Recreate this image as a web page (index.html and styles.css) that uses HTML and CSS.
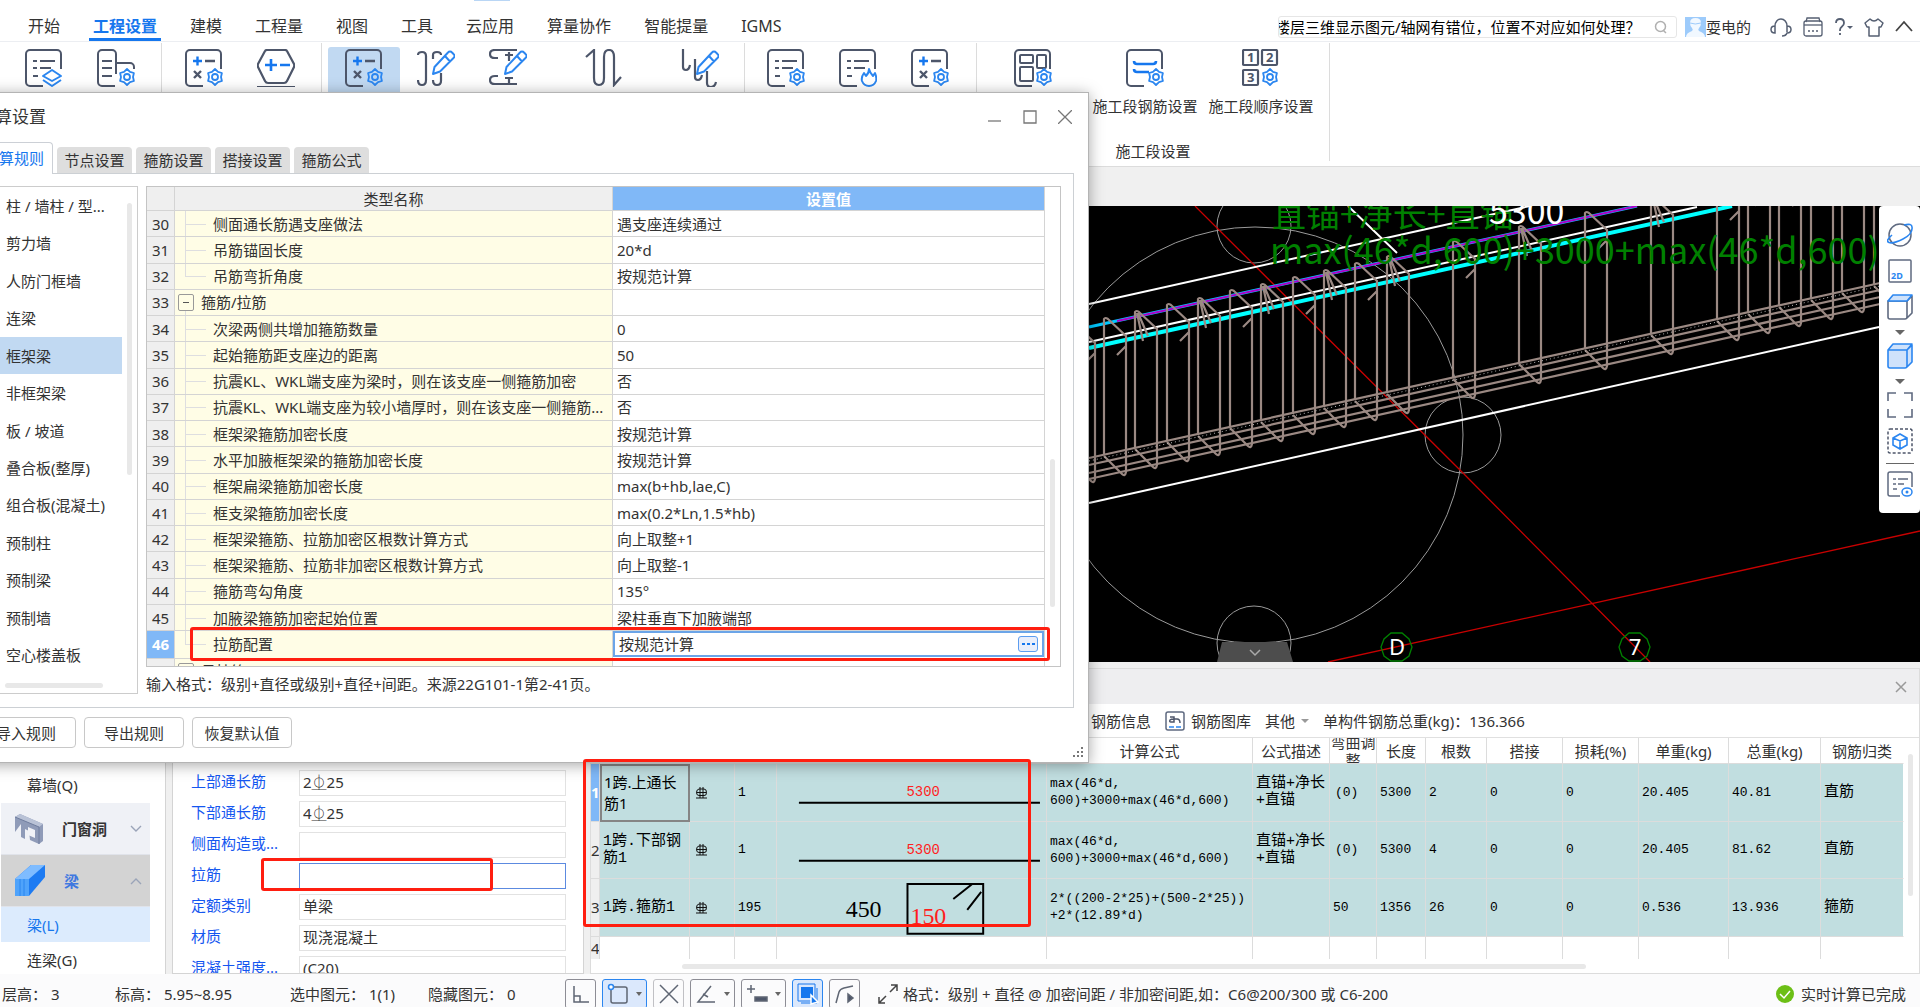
FILE: index.html
```html
<!DOCTYPE html>
<html lang="zh-CN">
<head>
  <meta charset="UTF-8">
  <meta name="viewport" content="width=device-width, initial-scale=1.0">
  <title>计算设置</title>
  <link rel="stylesheet" href="styles.css">
</head>
<body>
  <!-- shared icon parts -->
  <svg class="defs" width="0" height="0" aria-hidden="true">
    <symbol id="gear" viewBox="0 0 38 38">
      <g fill="none" stroke="#2b86f0" stroke-width="1.8" stroke-linejoin="round">
        <path d="M30 20l3 2.8 3.9 1.2-.9 4 .9 4-3.9 1.2-3 2.8-3-2.8-3.9-1.2.9-4-.9-4 3.9-1.2z"/>
        <circle cx="30" cy="28" r="3"/>
      </g>
    </symbol>
    <symbol id="page" viewBox="0 0 38 38">
      <path d="M36 20V5a4 4 0 0 0-4-4H5a4 4 0 0 0-4 4v28a4 4 0 0 0 4 4h13" fill="none" stroke="#4d566a" stroke-width="2"/>
    </symbol>
    <symbol id="lines" viewBox="0 0 38 38">
      <path d="M8 12h4M15 12h15M8 19h4M15 19h11M8 27h5" fill="none" stroke="#4d566a" stroke-width="2.2"/>
    </symbol>
    <symbol id="calc" viewBox="0 0 38 38">
      <path d="M8 12h9M12.500 7.500v9" fill="none" stroke="#1677ee" stroke-width="2.4"/>
      <path d="M20 12h10M9 22l7 7M16 22l-7 7" fill="none" stroke="#4d566a" stroke-width="2.4"/>
    </symbol>
    <symbol id="pencil" viewBox="0 0 38 38">
      <path d="M16 25l1.500-7L31 3.500a2.500 2.500 0 0 1 4 0l1.500 1.500a2.500 2.500 0 0 1 0 4L23 22.500zM28 7l5 5.500" fill="#fff" stroke="#2b86f0" stroke-width="2" stroke-linejoin="round"/>
    </symbol>
    <symbol id="rebar" viewBox="0 0 13 13">
      <path d="M5 1v11M8 1v11M1 12h11M1.500 6.500h10M4 3h5q2.500 0 2.500 3.500T9 9.500H4Q1.500 9.500 1.500 6.500T4 3z" fill="none" stroke="#111" stroke-width="1"/>
    </symbol>
  </svg>

  <header class="menubar">
    <nav class="menu">
      <a href="#">开始</a>
      <a href="#" class="active">工程设置</a>
      <a href="#">建模</a>
      <a href="#">工程量</a>
      <a href="#">视图</a>
      <a href="#">工具</a>
      <a href="#" class="hinted">云应用</a>
      <a href="#">算量协作</a>
      <a href="#">智能提量</a>
      <a href="#">IGMS</a>
    </nav>
    <div class="account">
      <div class="search">
        <input type="text" aria-label="搜索" value="楼层三维显示图元/轴网有错位，位置不对应如何处理？">
        <svg width="14" height="14" viewBox="0 0 14 14" fill="none" stroke="#b0b0b0" stroke-width="1.500"><circle cx="6.500" cy="6.500" r="5"/><path d="M9 10l3 3"/></svg>
      </div>
      <svg class="avatar" width="21" height="20" viewBox="0 0 21 20"><rect width="21" height="20" fill="#9dcbfb"/><path d="M1 20q0-4 6-6 1.500-1 0-3-2-2-2-5 0-5 5.500-5T16 6q0 3-2 5-1.500 2 0 3 6 2 6 6z" fill="#f1f8ff"/><path d="M5 6q5 2 11 0" stroke="#9dcbfb" fill="none"/></svg>
      <span class="user">耍电的</span>
      <div class="tools">
        <button type="button" aria-label="客服"><svg width="22" height="20" viewBox="0 0 22 20" fill="none" stroke="#555f72" stroke-width="1.500"><path d="M5 15V9a6 7 0 0 1 12 0v6M5 9q-4 0-4 3.500T5 16zM17 9q4 0 4 3.500T17 16q-1 3-5 3"/></svg></button>
        <button type="button" aria-label="日历"><svg width="20" height="20" viewBox="0 0 20 20" fill="none" stroke="#555f72" stroke-width="1.300"><path d="M3 5l1-4h12l1 4"/><rect x="1" y="4" width="18" height="15" rx="2"/><path d="M1 8h18"/><path d="M5 14h2M9 14h2M13 14h2"/></svg></button>
        <button type="button" aria-label="帮助"><svg width="19" height="20" viewBox="0 0 19 20"><path d="M2 6q0-4 4-4t4 4q0 2-2 3.500T6 13v1M6 16v2" fill="none" stroke="#555f72" stroke-width="1.800"/><path d="M13 9h6l-3 3z" fill="#555f72"/></svg></button>
        <button type="button" aria-label="皮肤"><svg width="20" height="20" viewBox="0 0 20 20" fill="none" stroke="#555f72" stroke-width="1.500" stroke-linejoin="round"><path d="M6 2q4 4 8 0l5 4-2 4h-2v9H5v-9H3L1 6z"/></svg></button>
        <button type="button" aria-label="收起"><svg width="18" height="20" viewBox="0 0 18 20" fill="none" stroke="#444" stroke-width="1.800"><path d="M1 14l8-9 8 9"/></svg></button>
      </div>
    </div>
  </header>

  <section class="ribbon">
    <div class="group g1">
      <div class="items">
        <button type="button" aria-label="工程信息"><svg viewBox="0 0 38 38"><use href="#page"/><use href="#lines"/><g fill="none" stroke="#2b86f0" stroke-width="2" stroke-linejoin="round"><path d="M18 27l9-6 9 6-9 5z" fill="#fff"/><path d="M18 31l9 6 9-6"/></g></svg></button>
        <button type="button" aria-label="楼层设置"><svg viewBox="0 0 38 38"><path d="M18 37H5a4 4 0 0 1-4-4V5a4 4 0 0 1 4-4h10a4 4 0 0 1 4 4v20M19 14h14a4 4 0 0 1 4 4v2M5 12h10M5 19h10M5 27h10" fill="none" stroke="#4d566a" stroke-width="2"/><use href="#gear"/></svg></button>
      </div>
    </div>
    <div class="group g2">
      <div class="items">
        <button type="button" aria-label="计算设置"><svg viewBox="0 0 38 38"><use href="#page"/><use href="#calc"/><use href="#gear"/></svg></button>
        <button type="button" aria-label="计算规则"><svg viewBox="0 0 38 38"><path d="M10 1h18q1.500 0 2 1l7 13q.5 1.500 0 3l-7 14q-1 2-3 2H11q-2 0-3-2L1 18q-.5-1.500 0-3L8 2q.5-1 2-1zM0 38h38" fill="none" stroke="#4d566a" stroke-width="2.200"/><path d="M8 16h12M14 10v12M23 16h10" fill="none" stroke="#1677ee" stroke-width="2.600"/></svg></button>
      </div>
    </div>
    <div class="group g3">
      <div class="items">
        <button type="button" class="on" aria-label="钢筋计算设置"><svg viewBox="0 0 38 38"><use href="#page"/><use href="#calc"/><use href="#gear"/></svg></button>
        <button type="button" aria-label="比重设置"><svg viewBox="0 0 38 38"><path d="M1 6q0-3 4-3t4 4v24q0 5-4 5t-4-5M16 10V6q0-3 4-3t4 3M24 24v8q0 4-4 4t-4-5" fill="none" stroke="#4d566a" stroke-width="2.200"/><use href="#pencil"/></svg></button>
        <button type="button" aria-label="弯钩设置"><svg viewBox="0 0 38 38"><path d="M28 1H6Q1 1 1 5t5 4h3M28 35H6q-5 0-5-4t5-4h3M16 6h8M20 3v9M16 29h8M20 29v6" fill="none" stroke="#4d566a" stroke-width="2.200"/><use href="#pencil"/></svg></button>
        <button type="button" class="xwide" aria-label="弯曲调整值设置"><svg viewBox="0 0 38 38"><path d="M1 8l8-7v28q0 7 5 7t5-7V8q0-7 5-7t5 7v28l7-8" fill="none" stroke="#4d566a" stroke-width="2.200"/></svg></button>
        <button type="button" aria-label="损耗设置"><svg viewBox="0 0 38 38"><path d="M2 0v18q0 3 3 3t4-5M14 10v18q0 3 3 3t4-5M26 22v12q0 4 4 4t5-5" fill="none" stroke="#4d566a" stroke-width="2.200"/><use href="#pencil"/></svg></button>
      </div>
    </div>
    <div class="group g4">
      <div class="items">
        <button type="button" aria-label="设置一"><svg viewBox="0 0 38 38"><use href="#page"/><use href="#lines"/><use href="#gear"/></svg></button>
        <button type="button" aria-label="设置二"><svg viewBox="0 0 38 38"><use href="#page"/><use href="#lines"/><path d="M30 20q1 4 4 7l2-3q2 5 1 8-2 5-7 5t-7-5q-1-4 2-8l2 3q3-3 3-7z" fill="#fff" stroke="#2b86f0" stroke-width="2" stroke-linejoin="round"/></svg></button>
        <button type="button" aria-label="设置三"><svg viewBox="0 0 38 38"><use href="#page"/><use href="#calc"/><use href="#gear"/></svg></button>
      </div>
    </div>
    <div class="group g5">
      <div class="items">
        <button type="button" class="wide" aria-label="施工段类型设置"><svg viewBox="0 0 38 38"><use href="#page"/><g fill="none" stroke="#4d566a" stroke-width="2"><rect x="6" y="6" width="13" height="8" rx="1"/><rect x="6" y="18" width="13" height="14" rx="1"/><rect x="23" y="6" width="9" height="13" rx="1"/></g><use href="#gear"/></svg></button>
        <button type="button" class="wide"><svg viewBox="0 0 38 38"><use href="#page"/><path d="M8 12q0 3 3 3h16q3 0 3-3M8 20q0 3 3 3h12" fill="none" stroke="#1677ee" stroke-width="2.600"/><use href="#gear"/></svg>施工段钢筋设置</button>
        <button type="button" class="xwide"><svg viewBox="0 0 38 38"><g fill="none" stroke="#4d566a" stroke-width="2.200"><rect x="1" y="1" width="15" height="15" rx="1"/><rect x="20" y="1" width="15" height="15" rx="1"/><rect x="1" y="21" width="15" height="15" rx="1"/></g><g class="digits"><text x="5" y="13">1</text><text x="24" y="13">2</text><text x="5" y="33">3</text></g><use href="#gear" x="-2"/></svg>施工段顺序设置</button>
      </div>
      <div class="caption">施工段设置</div>
    </div>
  </section>

  <main class="work">
    <aside class="nav">
      <ul>
        <li class="sub"><a href="#">幕墙(Q)</a></li>
        <li class="cat">
          <svg width="28" height="30" viewBox="0 0 28 30"><path d="M0 3l5-3 23 10v17l-4 3-9-4-1-9-4-2v10l-4-2V10L0 18z" fill="#8f9bb8"/><path d="M0 3l5-3 23 10-4 3z" fill="#b9c2d6"/><path d="M13 13l7 3v8l-7-3z" fill="#f0f2f7"/><path d="M0 3l24 10v17" fill="none" stroke="#6f7d9e"/></svg>
          <a href="#">门窗洞</a>
          <svg class="arrow" width="12" height="8" viewBox="0 0 12 8"><path d="M1 1l5 5 5-5"/></svg>
        </li>
        <li class="cat open">
          <svg width="30" height="31" viewBox="0 0 30 31"><path d="M0 14L16 0h14v12L14 31H0z" fill="#1d7bf2"/><path d="M0 14L16 0h14L14 14z" fill="#7fbcff"/><path d="M0 14h14v17H0z" fill="#4fa3fb"/><path d="M5 14v17M9 14v17" stroke="#2b86f0"/></svg>
          <a href="#">梁</a>
          <svg class="arrow" width="12" height="8" viewBox="0 0 12 8"><path d="M1 7l5-5 5 5"/></svg>
        </li>
        <li class="sub current"><a href="#">梁(L)</a></li>
        <li class="sub"><a href="#">连梁(G)</a></li>
      </ul>
    </aside>

    <section class="props">
      <form>
        <label for="p1">上部通长筋</label><input id="p1" type="text" value="2⏂25">
        <label for="p2">下部通长筋</label><input id="p2" type="text" value="4⏂25">
        <label for="p3">侧面构造或...</label><input id="p3" type="text">
        <label for="p4">拉筋</label><input id="p4" type="text" class="focus">
        <label for="p5">定额类别</label><input id="p5" type="text" value="单梁">
        <label for="p6">材质</label><input id="p6" type="text" value="现浇混凝土">
        <label for="p7">混凝土强度...</label><input id="p7" type="text" value="(C20)">
      </form>
    </section>

    <section class="stage">
      <div class="canvas">
        <svg class="scene" viewBox="590 206 1330 456" preserveAspectRatio="xMaxYMin slice">
          <defs>
            <!-- one stirrup, origin at the top of its left leg -->
            <g id="st-a"><path d="M0 137V1q1-2 4 0l18 17v136q-1 5-4 2L0 138M22 28l-9 9"/></g>
            <g id="st-b"><path d="M0 137V1q1-2 4 0l18 17v136q-1 5-4 2L0 138M2 2l6 28M3 2l10 23"/></g>
          </defs>
          <g fill="none" stroke="#9a9a9a">
            <circle cx="1255" cy="435" r="208"/>
            <circle cx="1254" cy="226" r="37"/>
            <circle cx="1463" cy="435" r="38"/>
            <circle cx="1254" cy="643" r="37"/>
          </g>
          <g fill="none" stroke="#c80000" stroke-width="1.300">
            <path d="M1195 206L1463 473L1650 662M1328 662L1920 531"/>
          </g>
          <g fill="none" stroke="#fff" stroke-width="2">
            <path d="M1089 304L1530 206M1348 206l49 47"/>
            <path d="M1089 503L1879 327"/>
          </g>
          <path d="M1089 327L1637 206" stroke="#00c8ff" stroke-width="3" fill="none"/>
          <path d="M1117 321L1637 206" stroke="#b000c8" stroke-width="2" fill="none"/>
          <path d="M1089 348L1732 206" stroke="#00ffff" stroke-width="4" fill="none"/>
          <path d="M1089 342L1697 207" stroke="#fff" stroke-width="2" fill="none"/>
          <g fill="none" stroke="#9b8983" stroke-width="2.200">
            <path d="M1089 458L1880 283M1089 465L1880 290M1089 473L1880 297M1089 479L1880 304"/>
            <use href="#st-a" x="1073" y="325"/>
            <use href="#st-a" x="1104" y="318"/>
            <use href="#st-b" x="1135" y="311"/>
            <use href="#st-a" x="1167" y="304"/>
            <use href="#st-b" x="1198" y="298"/>
            <use href="#st-a" x="1230" y="290"/>
            <use href="#st-b" x="1261" y="284"/>
            <use href="#st-a" x="1293" y="277"/>
            <use href="#st-b" x="1324" y="270"/>
            <use href="#st-a" x="1355" y="263"/>
            <use href="#st-b" x="1387" y="256"/>
            <use href="#st-a" x="1453" y="241"/>
            <use href="#st-b" x="1519" y="226"/>
            <use href="#st-a" x="1585" y="212"/>
            <use href="#st-b" x="1651" y="197"/>
            <use href="#st-a" x="1717" y="183"/>
            <use href="#st-b" x="1748" y="176"/>
            <use href="#st-a" x="1779" y="169"/>
            <use href="#st-b" x="1811" y="162"/>
            <use href="#st-a" x="1842" y="155"/>
            <use href="#st-b" x="1874" y="148"/>
          </g>
          <path d="M1089 461L1880 286" stroke="#bbb" stroke-dasharray="1 3" fill="none"/>
          <g class="notes">
            <text x="1272" y="227" class="desc">直锚+净长+直锚</text>
            <text x="1270" y="264">max(46*d,600)+3000+max(46*d,600)</text>
            <text x="1489" y="224" class="len">5300</text>
          </g>
          <path d="M1222 642h65l6 20h-76z" fill="#4d4d4d"/>
          <path d="M1250 650l5 5 5-5" fill="none" stroke="#aaa" stroke-width="1.500"/>
          <g fill="none" stroke="#008000" stroke-width="1.300">
            <path d="M1391 633h11l7 6 3 8-3 9-7 5h-11l-7-5-3-9 3-8z"/>
            <path d="M1629 633h11l7 6 3 8-3 9-7 5h-11l-7-5-3-9 3-8z"/>
          </g>
          <g class="axis"><text x="1397" y="655">D</text><text x="1635" y="655">7</text></g>
        </svg>
        <div class="viewbar">
          <button type="button" aria-label="动态观察"><svg width="26" height="26" viewBox="0 0 26 26" fill="none"><circle cx="13" cy="13" r="11" stroke="#5f6a80" stroke-width="1.500"/><path d="M5 13Q-2 19 2 20.500T16 17 25 5q0-4-8-2" stroke="#2b86f0" stroke-width="1.600"/></svg></button>
          <button type="button" aria-label="二维"><svg width="26" height="26" viewBox="0 0 26 26"><rect x="2" y="2" width="22" height="22" rx="1" fill="none" stroke="#5f6a80" stroke-width="1.500"/><text x="4" y="21" class="two-d">2D</text></svg></button>
          <button type="button" aria-label="视图方向"><svg width="26" height="26" viewBox="0 0 26 26" stroke-width="1.600" stroke-linejoin="round"><path d="M1 7h19v16q0 2-2 2H3q-2 0-2-2zM20 7l5-5v17l-5 5" fill="#fff" stroke="#5f6a80"/><path d="M1 7l5-6h19l-5 6z" fill="#cfe2fb" stroke="#2b86f0"/></svg></button>
          <i class="caret"></i>
          <button type="button" aria-label="显示模式"><svg width="26" height="26" viewBox="0 0 26 26" stroke-width="1.600" stroke-linejoin="round" fill="#cfe2fb" stroke="#2b86f0"><path d="M1 7h19v16q0 2-2 2H3q-2 0-2-2zM20 7l5-5v17l-5 5M1 7l5-6h19l-5 6z"/></svg></button>
          <i class="caret"></i>
          <button type="button" aria-label="全屏"><svg width="26" height="26" viewBox="0 0 26 26" fill="none" stroke="#5f6a80" stroke-width="1.600"><path d="M1 9V1h8M17 1h8v8M25 17v8h-8M9 25H1v-8"/></svg></button>
          <button type="button" aria-label="局部三维"><svg width="26" height="26" viewBox="0 0 26 26" fill="none"><rect x="1" y="1" width="24" height="24" rx="2" stroke="#4d566a" stroke-width="1.500" stroke-dasharray="3 2"/><path d="M13 6l7 4v7l-7 4-7-4v-7zM6 10l7 3 7-3M13 13v8" stroke="#2b86f0" stroke-width="1.600"/></svg></button>
          <hr>
          <button type="button" aria-label="显示设置"><svg width="26" height="26" viewBox="0 0 26 26" fill="none"><path d="M25 16V3q0-2-2-2H3Q1 1 1 3v20q0 2 2 2h10M6 8h3M11 8h10M6 13h3M11 13h6M6 18h4" stroke="#5f6a80" stroke-width="1.500"/><ellipse cx="20" cy="21" rx="5" ry="4" stroke="#2b86f0" stroke-width="1.500"/><circle cx="20" cy="21" r="1.500" fill="#2b86f0"/></svg></button>
        </div>
      </div>

      <div class="dock">
        <div class="dock-title">
          <button type="button" aria-label="关闭"><svg width="12" height="12" viewBox="0 0 12 12" stroke="#999" stroke-width="1.500"><path d="M1 1l10 10M11 1L1 11"/></svg></button>
        </div>
        <div class="dock-tools">
          <a href="#">钢筋信息</a>
          <a href="#"><svg width="20" height="20" viewBox="0 0 20 20" fill="none"><rect x="1" y="1" width="18" height="18" rx="2" stroke="#5f6a80" stroke-width="1.500"/><path d="M5 6h4v5H6q-2 0-1-2 1-1 4-1h3q3 0 3 4" stroke="#4d566a" stroke-width="1.500"/><path d="M4 16h5M11 16h5" stroke="#2b86f0" stroke-width="1.500"/></svg>钢筋图库</a>
          <a href="#">其他<i class="caret"></i></a>
          <span>单构件钢筋总重(kg)：136.366</span>
        </div>
        <div class="bars-wrap">
          <table class="bars">
            <colgroup>
              <col class="w9"><col class="w90"><col class="w45"><col class="w42"><col class="w270"><col><col class="w77"><col class="w47"><col class="w49"><col class="w61"><col class="w76"><col class="w76"><col class="w90"><col class="w92"><col class="w83">
            </colgroup>
            <thead>
              <tr><th></th><th>筋号</th><th>级别</th><th>直径</th><th>图形</th><th>计算公式</th><th>公式描述</th><th><div class="tight">弯曲调整</div></th><th>长度</th><th>根数</th><th>搭接</th><th>损耗(%)</th><th>单重(kg)</th><th>总重(kg)</th><th>钢筋归类</th></tr>
            </thead>
            <tbody>
              <tr class="bar">
                <th class="on">1</th><td class="picked">1跨.上通长<br>筋1</td><td><svg class="rb" viewBox="0 0 13 13"><use href="#rebar"/></svg></td><td>1</td>
                <td class="shape"><svg viewBox="0 0 270 56"><text x="130" y="32" class="red">5300</text><path d="M22 39h242" stroke="#000" stroke-width="2"/></svg></td>
                <td>max(46*d,<br>600)+3000+max(46*d,600)</td><td>直锚+净长<br>+直锚</td><td class="in">(0)</td><td>5300</td><td>2</td><td>0</td><td>0</td><td>20.405</td><td>40.81</td><td>直筋</td>
              </tr>
              <tr class="bar">
                <th>2</th><td>1跨.下部钢<br>筋1</td><td><svg class="rb" viewBox="0 0 13 13"><use href="#rebar"/></svg></td><td>1</td>
                <td class="shape"><svg viewBox="0 0 270 56"><text x="130" y="32" class="red">5300</text><path d="M22 39h242" stroke="#000" stroke-width="2"/></svg></td>
                <td>max(46*d,<br>600)+3000+max(46*d,600)</td><td>直锚+净长<br>+直锚</td><td class="in">(0)</td><td>5300</td><td>4</td><td>0</td><td>0</td><td>20.405</td><td>81.62</td><td>直筋</td>
              </tr>
              <tr class="bar">
                <th>3</th><td>1跨.箍筋1</td><td><svg class="rb" viewBox="0 0 13 13"><use href="#rebar"/></svg></td><td>195</td>
                <td class="shape"><svg viewBox="0 0 270 56"><g class="big"><text x="69" y="37">450</text><text x="134" y="44" class="red">150</text></g><path d="M131 4h76v50h-76zM177 19l19-15M191 30l14-18" fill="none" stroke="#000" stroke-width="2"/></svg></td>
                <td>2*((200-2*25)+(500-2*25))<br>+2*(12.89*d)</td><td></td><td>50</td><td>1356</td><td>26</td><td>0</td><td>0</td><td>0.536</td><td>13.936</td><td>箍筋</td>
              </tr>
              <tr class="blank"><th>4</th><td></td><td></td><td></td><td></td><td></td><td></td><td></td><td></td><td></td><td></td><td></td><td></td><td></td><td></td></tr>
            </tbody>
          </table>
          <i class="vscroll"></i>
          <i class="hscroll"></i>
        </div>
      </div>
    </section>
  </main>

  <footer class="status">
    <span class="s1">层高：&nbsp;3</span>
    <span class="s2">标高：&nbsp;5.95~8.95</span>
    <span class="s3">选中图元：&nbsp;1(1)</span>
    <span class="s4">隐藏图元：&nbsp;0</span>
    <div class="modes">
      <button type="button" aria-label="正交"><svg width="20" height="20" viewBox="0 0 20 20"><path d="M3 2v16h15M3 12h6v6"/></svg></button>
      <button type="button" class="drop on" aria-label="矩形"><svg width="22" height="22" viewBox="0 0 22 22"><rect x="4" y="4" width="16" height="16" rx="2"/><circle cx="4" cy="4" r="2.500" fill="#fff" stroke="#2b86f0"/></svg><i class="caret"></i></button>
      <button type="button" class="dim" aria-label="交点"><svg width="22" height="20" viewBox="0 0 22 20"><path d="M2 1l18 18M20 1L2 19"/></svg></button>
      <button type="button" class="drop" aria-label="角度"><svg width="22" height="20" viewBox="0 0 22 20"><path d="M20 18H3L16 2M8 10l5 3"/></svg><i class="caret"></i></button>
      <button type="button" class="drop" aria-label="偏移"><svg width="22" height="20" viewBox="0 0 22 20"><path d="M5 1v8M1 5h8"/><path d="M9 13h12v4H9z" fill="#4d566a"/></svg><i class="caret"></i></button>
      <button type="button" class="on" aria-label="图层"><svg width="22" height="22" viewBox="0 0 22 22"><path d="M4 4h12v11H4z" fill="#1677ee" stroke="none"/><path d="M1 1h17v17H1zM4 20h16V5" stroke="#1677ee" stroke-width="1"/><path d="M14 12l7 7-7 2z" fill="#1677ee" stroke="#fff"/></svg></button>
      <button type="button" aria-label="折线"><svg width="22" height="20" viewBox="0 0 22 20"><path d="M2 19L5 8q1-3 5-4l9-2"/><path d="M14 10v8l5-4z" fill="#4d566a"/></svg></button>
    </div>
    <svg class="expand" width="20" height="20" viewBox="0 0 20 20" fill="none" stroke="#444" stroke-width="1.500"><path d="M12 8l7-7M13 1h6v6M8 12l-7 7M1 13v6h6"/></svg>
    <span>格式：级别 + 直径 @ 加密间距 / 非加密间距,如：C6@200/300 或 C6-200</span>
    <span class="done"><svg width="18" height="18" viewBox="0 0 18 18"><circle cx="9" cy="9" r="9" fill="#6cbf16"/><path d="M4 9l4 4 6-7" fill="none" stroke="#fff" stroke-width="1.500"/></svg>实时计算已完成</span>
  </footer>

  <section class="dialog" role="dialog" aria-labelledby="dlg">
    <div class="titlebar">
      <h1 id="dlg">计算设置</h1>
      <button type="button" aria-label="最小化"><svg width="14" height="14" viewBox="0 0 14 14"><path d="M0 11h13"/></svg></button>
      <button type="button" aria-label="最大化"><svg width="14" height="14" viewBox="0 0 14 14"><path d="M1 1h12v12H1z"/></svg></button>
      <button type="button" aria-label="关闭"><svg width="14" height="14" viewBox="0 0 14 14"><path d="M0 0l14 14M14 0L0 14"/></svg></button>
    </div>
    <div class="tabs">
      <button type="button" class="active">计算规则</button>
      <button type="button">节点设置</button>
      <button type="button">箍筋设置</button>
      <button type="button">搭接设置</button>
      <button type="button">箍筋公式</button>
    </div>
    <div class="pane">
      <div class="kinds">
        <ul>
          <li>柱 / 墙柱 / 型...</li>
          <li>剪力墙</li>
          <li>人防门框墙</li>
          <li>连梁</li>
          <li class="on">框架梁</li>
          <li>非框架梁</li>
          <li>板 / 坡道</li>
          <li>叠合板(整厚)</li>
          <li>组合板(混凝土)</li>
          <li>预制柱</li>
          <li>预制梁</li>
          <li>预制墙</li>
          <li>空心楼盖板</li>
        </ul>
        <i class="vscroll"></i>
        <i class="hscroll"></i>
      </div>
      <div class="rules-col">
        <div class="rules-wrap">
          <table class="rules">
            <colgroup><col class="num"><col><col class="val"></colgroup>
            <thead><tr><th></th><th>类型名称</th><th class="on">设置值</th></tr></thead>
            <tbody>
              <tr><th>30</th><td>侧面通长筋遇支座做法</td><td>遇支座连续通过</td></tr>
              <tr><th>31</th><td>吊筋锚固长度</td><td>20*d</td></tr>
              <tr class="last"><th>32</th><td>吊筋弯折角度</td><td>按规范计算</td></tr>
              <tr class="head"><th>33</th><td><button type="button" aria-label="折叠"></button>箍筋/拉筋</td><td></td></tr>
              <tr><th>34</th><td>次梁两侧共增加箍筋数量</td><td>0</td></tr>
              <tr><th>35</th><td>起始箍筋距支座边的距离</td><td>50</td></tr>
              <tr><th>36</th><td>抗震KL、WKL端支座为梁时，则在该支座一侧箍筋加密</td><td>否</td></tr>
              <tr><th>37</th><td>抗震KL、WKL端支座为较小墙厚时，则在该支座一侧箍筋...</td><td>否</td></tr>
              <tr><th>38</th><td>框架梁箍筋加密长度</td><td>按规范计算</td></tr>
              <tr><th>39</th><td>水平加腋框架梁的箍筋加密长度</td><td>按规范计算</td></tr>
              <tr><th>40</th><td>框架扁梁箍筋加密长度</td><td>max(b+hb,lae,C)</td></tr>
              <tr><th>41</th><td>框支梁箍筋加密长度</td><td>max(0.2*Ln,1.5*hb)</td></tr>
              <tr><th>42</th><td>框架梁箍筋、拉筋加密区根数计算方式</td><td>向上取整+1</td></tr>
              <tr><th>43</th><td>框架梁箍筋、拉筋非加密区根数计算方式</td><td>向上取整-1</td></tr>
              <tr><th>44</th><td>箍筋弯勾角度</td><td>135°</td></tr>
              <tr><th>45</th><td>加腋梁箍筋加密起始位置</td><td>梁柱垂直下加腋端部</td></tr>
              <tr class="last editing"><th>46</th><td>拉筋配置</td><td><div class="edit">按规范计算<button type="button" aria-label="更多"><i></i><i></i><i></i></button></div></td></tr>
              <tr class="head"><th></th><td><button type="button" aria-label="折叠"></button>吊挂筋</td><td></td></tr>
            </tbody>
          </table>
          <i class="vscroll"></i>
        </div>
        <p>输入格式：级别+直径或级别+直径+间距。来源22G101-1第2-41页。</p>
      </div>
    </div>
    <div class="actions">
      <button type="button">导入规则</button>
      <button type="button">导出规则</button>
      <button type="button">恢复默认值</button>
    </div>
    <svg class="grip" width="11" height="11" viewBox="0 0 11 11" fill="#777"><path d="M8 0h2v2H8zM8 4h2v2H8zM8 8h2v2H8zM4 4h2v2H4zM4 8h2v2H4zM0 8h2v2H0z"/></svg>
  </section>

  <i class="mark mark-rule"></i>
  <i class="mark mark-bars"></i>
  <i class="mark mark-tie"></i>
</body>
</html>
```

FILE: styles.css
```css
* {
  box-sizing: border-box;
}

body {
  margin: 0;
  height: 100vh;
  display: flex;
  flex-direction: column;
  overflow: hidden;
  position: relative;
  background: #fff;
  color: #333;
  font: 15px/22px "Noto Sans", "Noto Sans CJK SC", sans-serif;
  white-space: nowrap;
}

a {
  color: inherit;
  text-decoration: none;
}

button,
input {
  font: inherit;
  color: inherit;
  margin: 0;
  padding: 0;
  border: 0;
  background: none;
}

ul {
  list-style: none;
  margin: 0;
  padding: 0;
}

svg {
  display: block;
  flex: none;
}

.defs {
  position: absolute;
}

.caret {
  border: 4px solid transparent;
  border-top-color: #666;
  border-bottom: 0;
}

/* menu */
.menubar {
  flex: none;
  height: 42px;
  display: flex;
  justify-content: space-between;
  border-bottom: 1px solid #eceef2;
  background: #fff;
}

.menu {
  display: flex;
  gap: 25px;
  padding-left: 24px;
  font-size: 16px;
}

.menu a {
  padding: 15px 4px 0;
  height: 41px;
  border-bottom: 3px solid transparent;
}

.menu .active {
  color: #1677ee;
  font-weight: 700;
  border-bottom-color: #1677ee;
}

.menu .hinted {
  background: linear-gradient(#b9d6f5, #b9d6f5) 12px 0 / 36px 1px no-repeat;
}

.account {
  display: flex;
  align-items: center;
  padding: 13px 7px 0 0;
}

.search {
  width: 399px;
  height: 22px;
  display: flex;
  align-items: center;
  border: 1px solid #e6e6e6;
  border-radius: 3px;
  padding-right: 8px;
}

.search input {
  flex: 1;
  min-width: 0;
  color: #000;
  text-indent: -4px;
}

.avatar {
  margin-left: 8px;
}

.user {
  width: 64px;
}

.tools {
  display: flex;
  gap: 11px;
}

/* ribbon */
.ribbon {
  flex: none;
  height: 124px;
  display: flex;
  padding: 1px 0 5px;
}

.group {
  border-right: 1px solid #dcdcdc;
  padding-top: 4px;
}

.items {
  display: flex;
  height: 93px;
}

.items button {
  width: 72px;
  height: 76px;
  padding-top: 2px;
  display: flex;
  flex-direction: column;
  align-items: center;
  gap: 8px;
  border-radius: 3px;
}

.items svg {
  width: 38px;
  height: 38px;
}

.items .wide {
  width: 112px;
}

.items .xwide {
  width: 120px;
}

.items .on {
  background: #c1d9f2;
}

.digits {
  font-size: 13px;
  font-weight: 700;
  fill: #4d566a;
}

.g1 { padding-left: 8px; padding-right: 9px; }
.g2 { padding-left: 6px; padding-right: 9px; }
.g3 { padding-left: 6px; padding-right: 8px; }
.g4 { padding-left: 5px; padding-right: 10px; }
.g5 { padding-right: 8px; }

.caption {
  padding-left: 8px;
  text-align: center;
}

/* work area */
.work {
  flex: 1;
  min-height: 0;
  display: flex;
  gap: 6px;
  border-top: 1px solid #dcdcdc;
  background: #f0f0f0;
}

.nav {
  width: 166px;
  display: flex;
  flex-direction: column;
  justify-content: flex-end;
  overflow: hidden;
  padding-right: 15px;
  background: #fff;
  border-right: 1px solid #d4d4d4;
}

.nav ul {
  margin-bottom: -3px;
  padding-left: 1px;
}

.nav .sub {
  height: 35px;
  padding: 7px 0 0 26px;
}

.nav .sub:first-child {
  height: 36px;
}

.nav .current {
  background: #dcebfd;
  color: #1677ee;
}

.nav .cat {
  height: 52px;
  display: flex;
  align-items: center;
  padding: 0 8px 0 14px;
  background: #eff1f6;
  border-bottom: 1px solid #e0e3ea;
  font-weight: 700;
}

.nav .cat a {
  flex: 1;
  padding-left: 19px;
}

.nav .open {
  background: #d3d3d3;
  color: #3f78e0;
}

.arrow {
  fill: none;
  stroke: #9aa4b8;
  stroke-width: 1.4;
}

.props {
  width: 412px;
  display: flex;
  flex-direction: column;
  justify-content: flex-end;
  overflow: hidden;
  background: #fff;
  border: 1px solid #d4d4d4;
}

.props form {
  display: grid;
  grid-template-columns: 108px 267px;
  grid-auto-rows: 26px;
  row-gap: 5px;
  padding-left: 18px;
  margin-bottom: -9px;
}

.props label {
  color: #1557f0;
}

.props input {
  border: 1px solid #e2e2e2;
  background: #fff;
  padding: 0 3px 2px;
}

.props .focus {
  border-color: #5c8ae0;
}

.stage {
  flex: 1;
  min-width: 0;
  display: flex;
  flex-direction: column;
  gap: 6px;
  padding-top: 39px;
}

.canvas {
  flex: 1;
  min-height: 0;
  position: relative;
  background: #000;
}

.scene {
  width: 100%;
  height: 100%;
}

.notes {
  font-family: "Noto Sans CJK SC", sans-serif;
  font-size: 36px;
  fill: #008000;
}

.notes .desc,
.notes .len {
  font-size: 34px;
}

.notes .len {
  fill: #fff;
}

.axis {
  font-size: 22px;
  fill: #fff;
  text-anchor: middle;
}

.viewbar {
  position: absolute;
  top: 0;
  right: 0;
  width: 41px;
  height: 307px;
  padding-top: 16px;
  display: flex;
  flex-direction: column;
  align-items: center;
  gap: 10px;
  background: #fff;
  border-radius: 4px;
}

.viewbar hr {
  width: 28px;
  margin: -1px 0 -3px;
  border: 0;
  border-top: 1px solid #666;
}

.viewbar .caret {
  border-width: 5px 5px 0;
  margin: 0 0 -2px;
}

.two-d {
  font-size: 9px;
  font-weight: 700;
  fill: #2b86f0;
}

/* rebar dock */
.dock {
  height: 306px;
  background: #fff;
  border: 1px solid #dcdcdc;
}

.dock-title {
  height: 35px;
  display: flex;
  align-items: center;
  justify-content: flex-end;
  padding-right: 12px;
  background: #eeeef0;
}

.dock-tools {
  height: 34px;
  display: flex;
  align-items: center;
  gap: 14px;
  padding-left: 500px;
  border-bottom: 1px solid #e0e0e0;
}

.dock-tools a {
  display: flex;
  align-items: center;
  gap: 6px;
}

.dock-tools .caret {
  border-top-color: #999;
}

.bars-wrap {
  position: relative;
  padding-right: 15px;
}

.bars {
  width: 100%;
  height: 221px;
  table-layout: fixed;
  border-collapse: separate;
  border-spacing: 0;
}

.w9 { width: 9px; }
.w42 { width: 42px; }
.w45 { width: 45px; }
.w47 { width: 47px; }
.w49 { width: 49px; }
.w61 { width: 61px; }
.w76 { width: 76px; }
.w77 { width: 77px; }
.w83 { width: 83px; }
.w90 { width: 90px; }
.w92 { width: 92px; }
.w270 { width: 270px; }

.bars th,
.bars td {
  padding: 0;
  overflow: hidden;
  border-right: 1px solid #dcdcdc;
  border-bottom: 1px solid #dcdcdc;
  font-weight: 400;
}

.bars thead th {
  height: 26px;
}

.bars tr > :last-child {
  border-right-color: transparent;
}

.bars tbody th {
  background: #efefef;
}

.bars tbody .on {
  background: #80b8f7;
  color: #fff;
  font-weight: 700;
}

.bar > * {
  height: 57px;
}

.bars .bar td {
  background: #c1dee0;
  background-clip: padding-box;
  padding-left: 3px;
  color: #000;
  font-family: "Liberation Mono", "Noto Sans CJK SC", monospace;
  font-size: 13px;
  line-height: 17px;
}

.bars .bar td:nth-child(2),
.bars .bar td:nth-child(7),
.bars .bar td:last-child {
  font-size: 15px;
}

.bars .bar td.in {
  padding-left: 5px;
}

.bars .bar .picked {
  border: 2px solid #858585;
  padding-left: 2px;
  font-family: "Noto Sans", "Noto Sans CJK SC", sans-serif;
  line-height: 21px;
}

.bars .bar .shape {
  padding: 0;
}

.blank > * {
  height: 22px;
}

.bars .blank > * {
  border-bottom: 0;
}

.tight {
  height: 25px;
  display: flex;
  align-items: center;
  justify-content: center;
  line-height: 18px;
  white-space: normal;
}

.rb {
  width: 13px;
  height: 13px;
  margin-left: 2px;
}

.red {
  fill: #ff1e1e;
}

.big {
  font-family: "Liberation Serif", serif;
}

.shape text {
  font-size: 14px;
}

.shape .big text {
  font-size: 24px;
}

.vscroll,
.hscroll {
  position: absolute;
  border-radius: 3px;
  background: #e8e8e8;
}

.bars-wrap .vscroll {
  top: 16px;
  right: 6px;
  width: 5px;
  height: 142px;
}

.bars-wrap .hscroll {
  left: 91px;
  right: 333px;
  bottom: -10px;
  height: 5px;
}

/* status bar */
.status {
  flex: none;
  height: 33px;
  display: flex;
  align-items: center;
  padding: 7px 14px 0 2px;
  background: #fbfbfc;
  overflow: hidden;
}

.status .s1 { width: 113px; }
.status .s2 { width: 175px; }
.status .s3 { width: 138px; }
.status .s4 { width: 137px; }

.modes {
  display: flex;
  gap: 6px;
}

.modes button {
  width: 31px;
  height: 30px;
  display: flex;
  align-items: center;
  justify-content: center;
  gap: 7px;
  border: 1px solid #8d8d95;
  border-radius: 3px;
}

.modes .drop {
  width: 45px;
}

.modes .on {
  background: #dbe8fc;
  border-color: #2b86f0;
}

.modes .dim {
  border-color: #c0c0c4;
}

.modes svg {
  fill: none;
  stroke: #5f6673;
  stroke-width: 1.5;
}

.modes .caret {
  border-width: 4px 3px 0;
}

.expand {
  margin: 0 5px 0 18px;
}

.done {
  margin-left: auto;
  display: flex;
  align-items: center;
  gap: 7px;
}

/* settings window */
.dialog {
  position: absolute;
  left: -40px;
  top: 92px;
  width: 1129px;
  height: 671px;
  display: flex;
  flex-direction: column;
  border: 1px solid #b4b4b4;
  background: #fff;
  box-shadow: 0 2px 14px rgba(0, 0, 0, 0.35);
}

.titlebar {
  height: 49px;
  display: flex;
  align-items: center;
  gap: 21px;
  padding: 0 16px 2px 17px;
}

.titlebar h1 {
  flex: 1;
  margin: 0;
  font-size: 17px;
  font-weight: 400;
}

.titlebar svg {
  fill: none;
  stroke: #777;
  stroke-width: 1.3;
}

.tabs {
  height: 31px;
  display: flex;
  align-items: flex-end;
  gap: 4px;
  padding-left: 15px;
}

.tabs button {
  width: 75px;
  height: 26px;
  background: #dedede;
  border-radius: 4px 4px 0 0;
}

.tabs .active {
  width: 77px;
  height: 32px;
  margin-bottom: -1px;
  padding: 0 1px 2px 0;
  position: relative;
  background: #fff;
  border: 1px solid #ccd0d6;
  border-bottom: 0;
  color: #1677ee;
}

.pane {
  flex: 1;
  min-height: 0;
  display: flex;
  gap: 8px;
  margin: 0 14px 0 15px;
  padding: 12px 12px 13px 11px;
  border: 1px solid #ccd0d4;
}

.kinds {
  width: 150px;
  position: relative;
  border: 1px solid #ccc;
  padding: 0 15px 19px 0;
}

.kinds ul {
  height: 100%;
  display: flex;
  flex-direction: column;
}

.kinds li {
  flex: 1;
  display: flex;
  align-items: center;
  padding-left: 17px;
}

.kinds .on {
  background: #c1d9f2;
}

.kinds .vscroll {
  top: 16px;
  right: 5px;
  width: 5px;
  height: 272px;
}

.kinds .hscroll {
  left: 16px;
  right: 34px;
  bottom: 5px;
  height: 5px;
}

.rules-col {
  flex: 1;
  min-width: 0;
}

.rules-wrap {
  height: 481px;
  position: relative;
  overflow: hidden;
  padding-right: 15px;
  border: 1px solid #c4c4c4;
}

.rules {
  width: 100%;
  height: 498px;
  table-layout: fixed;
  border-collapse: separate;
  border-spacing: 0;
}

.rules .num {
  width: 28px;
}

.rules .val {
  width: 432px;
}

.rules th,
.rules td {
  height: 26px;
  padding: 0;
  border-right: 1px solid #d4d4d4;
  border-bottom: 1px solid #d4d4d4;
  line-height: 22px;
  font-weight: 400;
}

.rules th {
  background: #efefef;
}

.rules thead th {
  height: 24px;
}

.rules thead .on,
.rules .editing th {
  background: #80b8f7;
  color: #fff;
  font-weight: 700;
}

.rules td {
  padding-left: 4px;
}

.rules td:nth-child(2) {
  position: relative;
  padding-left: 38px;
  padding-right: 4px;
  overflow: hidden;
  text-overflow: ellipsis;
  background: #fffde6;
}

/* tree lines */
.rules td:nth-child(2)::before {
  content: "";
  position: absolute;
  left: 10px;
  top: 0;
  bottom: -1px;
  border-left: 1px solid #dedee0;
}

.rules td:nth-child(2)::after {
  content: "";
  position: absolute;
  left: 10px;
  top: 50%;
  width: 21px;
  border-top: 1px solid #dedee0;
}

.rules .last td:nth-child(2)::before {
  bottom: 50%;
}

.rules .head td:nth-child(2) {
  padding-left: 26px;
}

.rules .head td:nth-child(2)::before {
  top: 80%;
}

.rules .head td:nth-child(2)::after {
  display: none;
}

.rules .head button {
  position: absolute;
  left: 3px;
  top: 4px;
  width: 16px;
  height: 17px;
  border: 1px solid #999;
  border-radius: 2px;
  background: linear-gradient(#555, #555) center / 6px 1px no-repeat #fffde6;
}

.rules .editing td:last-child {
  padding: 0;
}

.edit {
  height: 26px;
  display: flex;
  align-items: center;
  justify-content: space-between;
  padding: 0 4px;
  border: 2px solid #6ba5e8;
}

.edit button {
  width: 20px;
  height: 16px;
  display: flex;
  align-items: center;
  justify-content: center;
  gap: 2px;
  border: 1px solid #5c9df0;
  border-radius: 3px;
  background: #e9eefb;
}

.edit i {
  width: 3px;
  height: 2px;
  background: #1677ee;
}

.rules-wrap .vscroll {
  top: 272px;
  right: 5px;
  width: 5px;
  height: 148px;
}

.rules-col p {
  margin: 6px 0 0;
}

.actions {
  display: flex;
  gap: 8px;
  padding: 9px 15px 14px;
}

.actions button {
  width: 100px;
  height: 31px;
  border: 1px solid #c8c8c8;
  border-radius: 4px;
  background: #fff;
}

.grip {
  position: absolute;
  right: 4px;
  bottom: 4px;
}

/* red callouts */
.mark {
  position: absolute;
  border: 3px solid #ff1e10;
  border-radius: 3px;
}

.mark-rule {
  left: 190px;
  top: 627px;
  width: 860px;
  height: 34px;
}

.mark-bars {
  left: 583px;
  top: 759px;
  width: 448px;
  height: 168px;
}

.mark-tie {
  left: 261px;
  top: 858px;
  width: 232px;
  height: 33px;
}
```
